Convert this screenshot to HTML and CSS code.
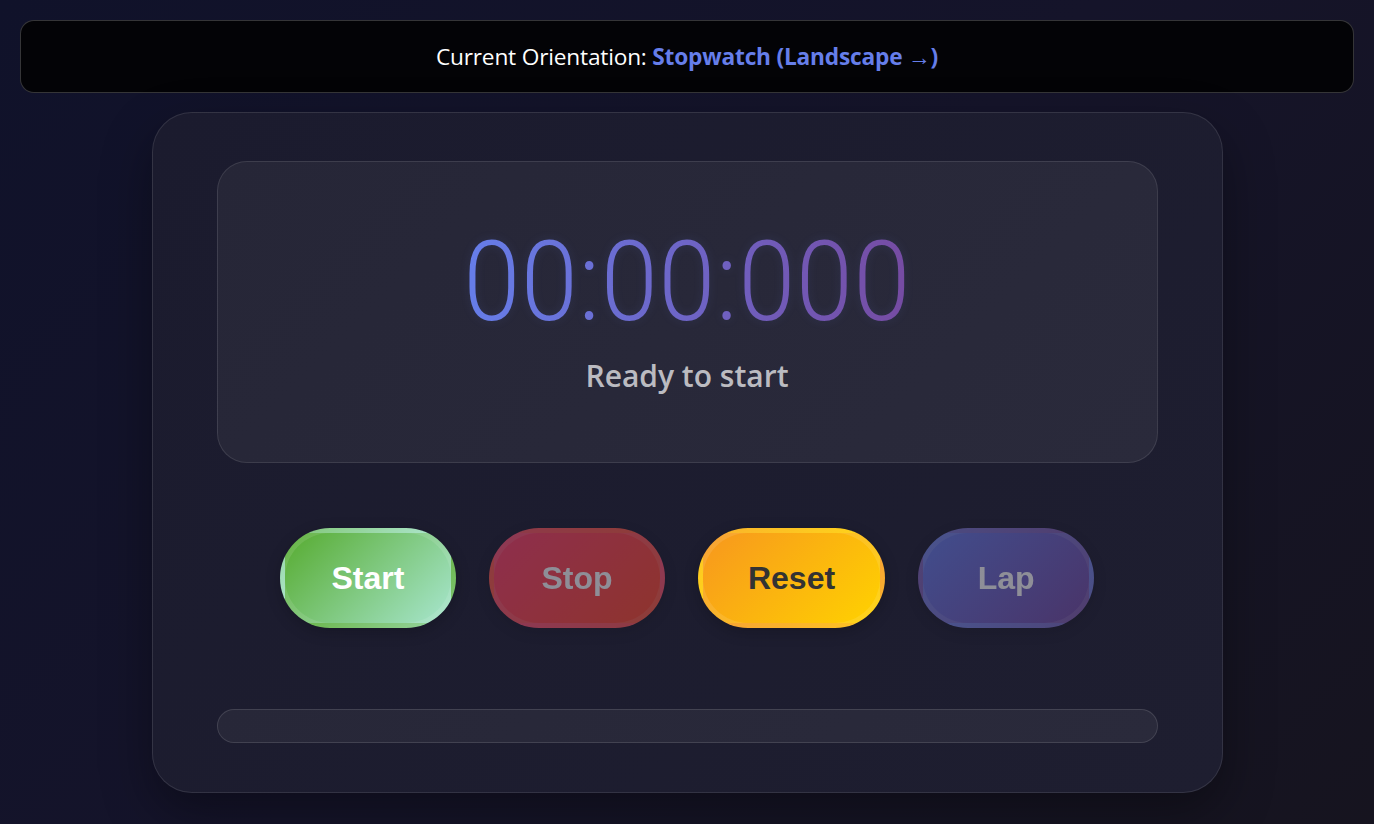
FILE: index.html
```html
<!DOCTYPE html>
<html lang="en">
<head>
<meta charset="utf-8">
<title>Stopwatch</title>
<link rel="stylesheet" href="styles.css">
</head>
<body>
  <div class="orientation">Current Orientation: <span class="mode">Stopwatch (Landscape →)</span></div>
  <main class="card">
    <section class="display">
      <div class="time"><span class="digits">00:00:000</span></div>
      <div class="status">Ready to start</div>
    </section>
    <div class="controls">
      <button class="btn start">Start</button>
      <button class="btn stop" disabled>Stop</button>
      <button class="btn reset">Reset</button>
      <button class="btn lap" disabled>Lap</button>
    </div>
    <div class="laps"></div>
  </main>
</body>
</html>
```
FILE: styles.css
```css
* { box-sizing: border-box; }
html, body { height: 100%; }
body {
  margin: 0;
  padding: 20px;
  background: linear-gradient(135deg, #10122a 0%, #15142a 50%, #16141f 100%);
  font-family: "Open Sans", "Noto Sans", sans-serif;
  display: flex;
  flex-direction: column;
  align-items: center;
  gap: 19px;
}
.orientation {
  width: 100%;
  height: 73px;
  display: flex;
  align-items: center;
  justify-content: center;
  background: #030306;
  border: 1px solid rgba(255,255,255,0.2);
  border-radius: 14px;
  color: #fff;
  font-size: 22.7px;
  letter-spacing: -0.2px;
  white-space: pre;
}
.mode { color: #667eea; font-weight: 700; }
.card {
  width: 1071px;
  height: 681px;
  padding: 48px 64px 49px;
  border-radius: 40px;
  border: 1px solid rgba(255,255,255,0.1);
  background: linear-gradient(135deg, #1b1b2e, #1e1e30);
  box-shadow: 0 20px 50px rgba(0,0,0,0.35);
  display: flex;
  flex-direction: column;
}
.display {
  height: 302px;
  border-radius: 30px;
  border: 1px solid rgba(255,255,255,0.1);
  background: linear-gradient(135deg, #262637, #2a2a3b);
  display: flex;
  flex-direction: column;
  align-items: center;
  padding-top: 54px;
}
.time {
  font-family: Roboto, "Open Sans", sans-serif;
  font-weight: 300;
  font-size: 111px;
  line-height: 132px;
  height: 132px;
  display: flex;
  justify-content: center;
}
.digits {
  display: inline-block;
  transform: scaleX(0.92);
  letter-spacing: 1px;
  background: linear-gradient(90deg, #667eea, #764ba2);
  -webkit-background-clip: text;
  background-clip: text;
  color: transparent;
  filter: drop-shadow(0 0 5px rgba(102,126,234,0.12));
}
.status {
  margin-top: 7px;
  font-size: 30px;
  font-weight: 600;
  color: rgba(255,255,255,0.7);
}
.controls {
  margin-top: 65px;
  display: flex;
  justify-content: center;
  gap: 33px;
}
.btn {
  height: 100px;
  min-width: 176px;
  padding: 0 45px;
  border-radius: 50px;
  border: 5px solid rgba(255,255,255,0.1);
  font-family: "Liberation Sans", Arial, sans-serif;
  font-weight: 700;
  font-size: 32px;
  color: #fff;
  box-shadow: 0 4px 15px rgba(0,0,0,0.2);
}
.start { background: linear-gradient(135deg, #56ab2f, #a8e6cf); }
.stop { background: linear-gradient(135deg, #ff416c, #ff4b2b); opacity: 0.5; }
.reset { background: linear-gradient(135deg, #f7971e, #ffd200); color: #333; }
.lap { background: linear-gradient(135deg, #667eea, #764ba2); opacity: 0.5; }
.laps {
  margin-top: 81px;
  height: 34px;
  border-radius: 17px;
  border: 1px solid rgba(255,255,255,0.12);
  background: linear-gradient(135deg, #272738, #2a2a3b);
}
```
